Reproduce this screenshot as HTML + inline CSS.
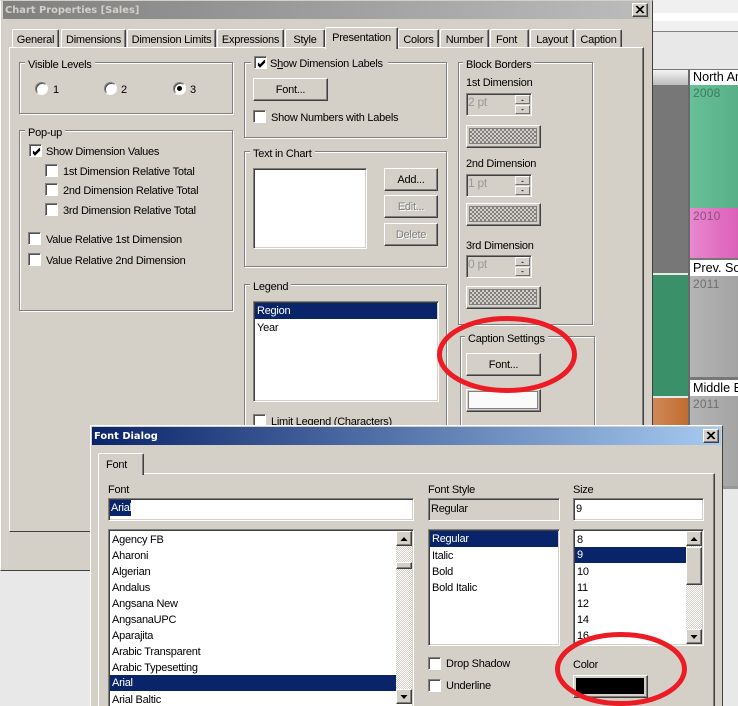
<!DOCTYPE html>
<html><head><meta charset="utf-8"><style>
html,body{margin:0;padding:0;height:706px;overflow:hidden}
body{width:738px;position:relative;background:#e8e8e8;font:11px/18px "Liberation Sans",sans-serif;letter-spacing:-.25px;color:#000}
#w{left:0;top:0;width:738px;height:706px;overflow:hidden}
div,span{position:absolute;box-sizing:border-box}
.t{white-space:nowrap;height:14px}
.bg{background:#d4d0c8}
.g{border:1px solid #808080;box-shadow:inset 1px 1px 0 #fff,1px 1px 0 #fff}
.l{background:#d4d0c8;padding:0 3px;white-space:nowrap;height:14px}
.tab{background:#d4d0c8;border-top:1px solid #fff;border-left:1px solid #fff;border-right:1px solid #404040;box-shadow:inset -1px 0 0 #808080;border-radius:2px 2px 0 0;text-align:center;white-space:nowrap;padding-top:1px}
.cb{width:13px;height:13px;background:#fff;border:1px solid;border-color:#808080 #fff #fff #808080;box-shadow:inset 1px 1px 0 #505050}
.cb svg{position:absolute;left:1px;top:1px}
.rd{width:13px;height:13px;border-radius:50%;background:#fff;border:1px solid;border-color:#808080 #fff #fff #808080;box-shadow:inset 1px 1px 0 #505050}
.rd i{position:absolute;left:3px;top:3px;width:5px;height:5px;border-radius:50%;background:#000}
.btn{background:#d4d0c8;border:1px solid;border-color:#fff #404040 #404040 #fff;box-shadow:inset -1px -1px 0 #808080;text-align:center;white-space:nowrap}
.sp{background:#d4d0c8;border:1px solid;border-color:#fff #707070 #707070 #fff}
.sp svg{position:absolute;left:0;top:0}
.sunk{border:1px solid;border-color:#808080 #fff #fff #808080;box-shadow:inset 1px 1px 0 #404040,inset -1px -1px 0 #d4d0c8;background:#fff}
.dis{color:#808080;text-shadow:1px 1px 0 #fff}
.sw{background:repeating-conic-gradient(#808080 0 25%,#d4d0c8 0 50%) 0 0/4px 4px;box-shadow:0 0 0 1px #808080}
.sel{background:#0a246a;color:#fff}
.dith{background:repeating-conic-gradient(#fff 0 25%,#d4d0c8 0 50%) 0 0/2px 2px}
.ttl{font:bold 9.9px/16px "DejaVu Sans",sans-serif;letter-spacing:0}
.h{font-size:12.6px;letter-spacing:0}
.y{font-size:12px;letter-spacing:.2px}
</style></head><body><div id="w">

<!-- background chart -->
<div style="left:652px;top:0;width:86px;height:13px;background:#f0f0f0"></div>
<div style="left:652px;top:13px;width:86px;height:8px;background:#fff"></div>
<div style="left:652px;top:21px;width:86px;height:10px;background:#f0f0f0"></div>
<div style="left:652px;top:31px;width:86px;height:1px;background:#808080"></div>
<div style="left:652px;top:32px;width:86px;height:38px;background:#e8e8e8"></div>
<div style="left:652px;top:69px;width:86px;height:1px;background:#777"></div>
<div style="left:653px;top:70px;width:35px;height:15px;background:linear-gradient(#f4f4f4,#bbb)"></div>
<div style="left:653px;top:85px;width:35px;height:188px;background:#777"></div>
<div style="left:653px;top:273px;width:35px;height:2px;background:#e8e8e8"></div>
<div style="left:653px;top:275px;width:35px;height:121px;background:#3a9068"></div>
<div style="left:653px;top:396px;width:35px;height:2px;background:#e8e8e8"></div>
<div style="left:653px;top:398px;width:35px;height:30px;background:linear-gradient(90deg,#d08858,#c06c30)"></div>
<div style="left:688px;top:70px;width:2px;height:360px;background:#6a6a6a"></div>
<div style="left:690px;top:70px;width:48px;height:15px;background:#fff"></div>
<div class="t h" style="left:693px;top:68px">North America</div>
<div style="left:690px;top:85px;width:48px;height:123px;background:linear-gradient(90deg,#68c098,#58b088)"></div>
<div class="t y" style="left:693px;top:84px;color:#3f7a60">2008</div>
<div style="left:690px;top:208px;width:48px;height:50px;background:linear-gradient(90deg,#e888d0,#dc60b8)"></div>
<div class="t y" style="left:693px;top:207px;color:#8a5080">2010</div>
<div style="left:690px;top:258px;width:48px;height:2px;background:#777"></div>
<div style="left:690px;top:260px;width:48px;height:16px;background:#fff"></div>
<div class="t h" style="left:693px;top:259px">Prev. Sources</div>
<div style="left:690px;top:276px;width:48px;height:101px;background:linear-gradient(90deg,#b4b4b4,#a4a4a4)"></div>
<div class="t y" style="left:693px;top:275px;color:#707070">2011</div>
<div style="left:690px;top:377px;width:48px;height:3px;background:#777"></div>
<div style="left:690px;top:380px;width:48px;height:16px;background:#fff"></div>
<div class="t h" style="left:693px;top:379px">Middle East</div>
<div style="left:690px;top:396px;width:48px;height:90px;background:linear-gradient(90deg,#b4b4b4,#a4a4a4)"></div>
<div class="t y" style="left:693px;top:395px;color:#707070">2011</div>
<div style="left:723px;top:486px;width:15px;height:3px;background:#999"></div>

<!-- chart properties -->
<div class="bg" style="left:0;top:0;width:653px;height:571px;border-right:1px solid #404040;border-bottom:1px solid #404040;border-left:1px solid #fff;border-top:1px solid #d4d0c8"></div>
<div style="left:3px;top:1px;width:647px;height:18px;background:linear-gradient(90deg,#808080,#bcbcbc)"></div>
<div class="t ttl" style="left:5px;top:3px;color:#d4d0c8">Chart Properties [Sales]</div>
<div class="btn" style="left:632px;top:3px;width:16px;height:14px"><svg width="14" height="12" style="position:absolute;left:0;top:0"><path d="M3 2L10 9M4 2L11 9M10 2L3 9M11 2L4 9" stroke="#000" fill="none"/></svg></div>

<div class="bg" style="left:9px;top:47px;width:635px;height:485px;border-left:1px solid #fff;border-top:1px solid #fff;border-right:1px solid #404040;border-bottom:1px solid #404040;box-shadow:inset -1px 0 0 #808080"></div>

<div class="tab" style="left:12px;top:29px;width:47px;height:18px">General</div>
<div class="tab" style="left:61px;top:29px;width:65px;height:18px">Dimensions</div>
<div class="tab" style="left:127px;top:29px;width:89px;height:18px">Dimension Limits</div>
<div class="tab" style="left:217px;top:29px;width:67px;height:18px">Expressions</div>
<div class="tab" style="left:285px;top:29px;width:40px;height:18px">Style</div>
<div class="tab" style="left:325px;top:27px;width:73px;height:22px;z-index:2">Presentation</div>
<div class="tab" style="left:398px;top:29px;width:41px;height:18px">Colors</div>
<div class="tab" style="left:440px;top:29px;width:49px;height:18px">Number</div>
<div class="tab" style="left:490px;top:29px;width:39px;height:18px;text-align:left;padding-left:5px">Font</div>
<div class="tab" style="left:530px;top:29px;width:44px;height:18px">Layout</div>
<div class="tab" style="left:575px;top:29px;width:47px;height:18px">Caption</div>

<!-- Visible Levels -->
<div class="g" style="left:19px;top:62px;width:214px;height:52px"></div>
<div class="l" style="left:25px;top:56px">Visible Levels</div>
<div class="rd" style="left:35px;top:82px"></div><div class="t" style="left:53px;top:81px">1</div>
<div class="rd" style="left:104px;top:82px"></div><div class="t" style="left:121px;top:81px">2</div>
<div class="rd" style="left:173px;top:82px"><i></i></div><div class="t" style="left:190px;top:81px">3</div>

<!-- Pop-up -->
<div class="g" style="left:19px;top:130px;width:214px;height:181px"></div>
<div class="l" style="left:25px;top:124px">Pop-up</div>
<div class="cb" style="left:29px;top:144px"><svg width="11" height="11"><path d="M2 5L4 7L9 2M2 6L4 8L9 3M2 7L4 9L9 4" stroke="#000" fill="none"/></svg></div>
<div class="t" style="left:46px;top:143px">Show Dimension Values</div>
<div class="cb" style="left:45px;top:164px"></div><div class="t" style="left:63px;top:163px">1st Dimension Relative Total</div>
<div class="cb" style="left:45px;top:183px"></div><div class="t" style="left:63px;top:182px">2nd Dimension Relative Total</div>
<div class="cb" style="left:45px;top:203px"></div><div class="t" style="left:63px;top:202px">3rd Dimension Relative Total</div>
<div class="cb" style="left:28px;top:232px"></div><div class="t" style="left:46px;top:231px">Value Relative 1st Dimension</div>
<div class="cb" style="left:28px;top:253px"></div><div class="t" style="left:46px;top:252px">Value Relative 2nd Dimension</div>

<!-- Show Dimension Labels -->
<div class="g" style="left:244px;top:62px;width:203px;height:76px"></div>
<div class="bg" style="left:251px;top:55px;width:137px;height:15px"></div>
<div class="cb" style="left:254px;top:56px"><svg width="11" height="11"><path d="M2 5L4 7L9 2M2 6L4 8L9 3M2 7L4 9L9 4" stroke="#000" fill="none"/></svg></div>
<div class="t" style="left:270px;top:55px">S<u>h</u>ow Dimension Labels</div>
<div class="btn" style="left:253px;top:78px;width:75px;height:23px;padding-top:2px">Font...</div>
<div class="cb" style="left:253px;top:110px"></div><div class="t" style="left:271px;top:109px">Show Numbers with Labels</div>

<!-- Text in Chart -->
<div class="g" style="left:244px;top:151px;width:203px;height:116px"></div>
<div class="l" style="left:250px;top:145px">Text in Chart</div>
<div class="sunk" style="left:253px;top:168px;width:114px;height:81px"></div>
<div class="btn" style="left:384px;top:168px;width:54px;height:23px;padding-top:2px">Add...</div>
<div class="btn dis" style="left:384px;top:195px;width:54px;height:23px;padding-top:2px">Edit...</div>
<div class="btn dis" style="left:384px;top:223px;width:54px;height:23px;padding-top:2px">Delete</div>

<!-- Legend -->
<div class="g" style="left:244px;top:284px;width:203px;height:160px"></div>
<div class="l" style="left:250px;top:278px">Legend</div>
<div class="sunk" style="left:253px;top:301px;width:186px;height:101px"></div>
<div class="sel t" style="left:255px;top:303px;width:182px;height:16px;padding:0 2px;line-height:17px">Region</div>
<div class="t" style="left:257px;top:319px">Year</div>
<div class="cb" style="left:253px;top:414px"></div><div class="t" style="left:271px;top:413px">Limit Legend (Characters)</div>

<!-- Block Borders -->
<div class="g" style="left:458px;top:62px;width:135px;height:263px"></div>
<div class="l" style="left:463px;top:56px">Block Borders</div>
<div class="t" style="left:466px;top:74px">1st Dimension</div>
<div class="sunk" style="left:466px;top:93px;width:66px;height:23px;background:#d4d0c8"></div>
<div class="t" style="left:468px;top:93px;color:#999;font-size:12px">2 pt</div>
<div class="sp" style="left:515px;top:95px;width:15px;height:9px"><svg width="13" height="7"><path d="M5 5h3L6.5 3.5z" fill="#404040"/></svg></div><div class="sp" style="left:515px;top:105px;width:15px;height:9px"><svg width="13" height="7"><path d="M5 3h3L6.5 4.5z" fill="#404040"/></svg></div>
<div class="btn" style="left:466px;top:125px;width:75px;height:23px"><div class="sw" style="left:3px;top:3px;width:66px;height:14px"></div></div>

<div class="t" style="left:466px;top:155px">2nd Dimension</div>
<div class="sunk" style="left:466px;top:174px;width:66px;height:23px;background:#d4d0c8"></div>
<div class="t" style="left:468px;top:174px;color:#999;font-size:12px">1 pt</div>
<div class="sp" style="left:515px;top:176px;width:15px;height:9px"><svg width="13" height="7"><path d="M5 5h3L6.5 3.5z" fill="#404040"/></svg></div><div class="sp" style="left:515px;top:186px;width:15px;height:9px"><svg width="13" height="7"><path d="M5 3h3L6.5 4.5z" fill="#404040"/></svg></div>
<div class="btn" style="left:466px;top:203px;width:75px;height:23px"><div class="sw" style="left:3px;top:3px;width:66px;height:14px"></div></div>

<div class="t" style="left:466px;top:237px">3rd Dimension</div>
<div class="sunk" style="left:466px;top:255px;width:66px;height:23px;background:#d4d0c8"></div>
<div class="t" style="left:468px;top:255px;color:#999;font-size:12px">0 pt</div>
<div class="sp" style="left:515px;top:257px;width:15px;height:9px"><svg width="13" height="7"><path d="M5 5h3L6.5 3.5z" fill="#404040"/></svg></div><div class="sp" style="left:515px;top:267px;width:15px;height:9px"><svg width="13" height="7"><path d="M5 3h3L6.5 4.5z" fill="#404040"/></svg></div>
<div class="btn" style="left:466px;top:286px;width:75px;height:23px"><div class="sw" style="left:3px;top:3px;width:66px;height:14px"></div></div>

<!-- Caption Settings -->
<div class="g" style="left:460px;top:336px;width:135px;height:100px"></div>
<div class="l" style="left:465px;top:330px">Caption Settings</div>
<div class="btn" style="left:466px;top:353px;width:75px;height:23px;padding-top:2px">Font...</div>
<div class="btn" style="left:466px;top:389px;width:75px;height:23px"><div style="left:2px;top:2px;width:68px;height:16px;background:#fafafa;box-shadow:0 0 0 1px #808080"></div></div>

<!-- Font dialog -->
<div class="bg" style="left:90px;top:425px;width:633px;height:290px;border-left:1px solid #fff;border-top:1px solid #fff;border-right:1px solid #404040;box-shadow:inset 1px 1px 0 #d4d0c8"></div>
<div style="left:92px;top:427px;width:629px;height:18px;background:linear-gradient(90deg,#0a246a,#a6caf0)"></div>
<div class="t ttl" style="left:94px;top:429px;color:#fff">Font Dialog</div>
<div class="btn" style="left:703px;top:429px;width:16px;height:14px"><svg width="14" height="12" style="position:absolute;left:0;top:0"><path d="M3 2L10 9M4 2L11 9M10 2L3 9M11 2L4 9" stroke="#000" fill="none"/></svg></div>

<div class="bg" style="left:98px;top:473px;width:617px;height:240px;border-left:1px solid #fff;border-top:1px solid #fff;border-right:1px solid #404040;box-shadow:inset -1px 0 0 #808080"></div>
<div class="tab" style="left:98px;top:453px;width:46px;height:22px;z-index:2;padding-top:2px;text-align:left;padding-left:7px">Font</div>

<div class="t" style="left:108px;top:481px">Font</div>
<div class="sunk" style="left:108px;top:498px;width:306px;height:23px"></div>
<div class="sel t" style="left:110px;top:500px;width:21px;height:16px;padding-left:1px;line-height:17px">Arial</div>

<div class="sunk" style="left:108px;top:529px;width:306px;height:180px"></div>
<div class="t" style="left:112px;top:531px">Agency FB</div>
<div class="t" style="left:112px;top:547px">Aharoni</div>
<div class="t" style="left:112px;top:563px">Algerian</div>
<div class="t" style="left:112px;top:579px">Andalus</div>
<div class="t" style="left:112px;top:595px">Angsana New</div>
<div class="t" style="left:112px;top:611px">AngsanaUPC</div>
<div class="t" style="left:112px;top:627px">Aparajita</div>
<div class="t" style="left:112px;top:643px">Arabic Transparent</div>
<div class="t" style="left:112px;top:659px">Arabic Typesetting</div>
<div class="sel t" style="left:110px;top:675px;width:286px;height:16px;padding:0 2px;line-height:17px">Arial</div>
<div class="t" style="left:112px;top:691px">Arial Baltic</div>
<div class="dith" style="left:396px;top:531px;width:16px;height:173px"></div>
<div class="btn" style="left:396px;top:531px;width:16px;height:15px"><svg width="14" height="13" style="position:absolute;left:0;top:0"><path d="M3.5 9h7L7 5z" fill="#000"/></svg></div>
<div class="btn" style="left:396px;top:562px;width:16px;height:7px"></div>
<div class="btn" style="left:396px;top:689px;width:16px;height:15px"><svg width="14" height="13" style="position:absolute;left:0;top:0"><path d="M3.5 5h7L7 9z" fill="#000"/></svg></div>

<div class="t" style="left:428px;top:481px">Font Style</div>
<div class="sunk" style="left:428px;top:498px;width:132px;height:23px;background:#d4d0c8"></div>
<div class="t" style="left:431px;top:500px">Regular</div>
<div class="sunk" style="left:428px;top:529px;width:132px;height:117px"></div>
<div class="sel t" style="left:430px;top:531px;width:128px;height:16px;padding:0 2px;line-height:17px">Regular</div>
<div class="t" style="left:432px;top:547px">Italic</div>
<div class="t" style="left:432px;top:563px">Bold</div>
<div class="t" style="left:432px;top:579px">Bold Italic</div>

<div class="t" style="left:573px;top:481px">Size</div>
<div class="sunk" style="left:573px;top:498px;width:131px;height:23px"></div>
<div class="t" style="left:576px;top:500px">9</div>
<div class="sunk" style="left:573px;top:529px;width:131px;height:117px"></div>
<div class="t" style="left:577px;top:531px">8</div>
<div class="sel t" style="left:575px;top:547px;width:111px;height:16px;padding:0 2px;line-height:17px">9</div>
<div class="t" style="left:577px;top:563px">10</div>
<div class="t" style="left:577px;top:579px">11</div>
<div class="t" style="left:577px;top:595px">12</div>
<div class="t" style="left:577px;top:611px">14</div>
<div class="t" style="left:577px;top:627px">16</div>
<div class="dith" style="left:686px;top:531px;width:16px;height:113px"></div>
<div class="btn" style="left:686px;top:531px;width:16px;height:15px"><svg width="14" height="13" style="position:absolute;left:0;top:0"><path d="M3.5 9h7L7 5z" fill="#000"/></svg></div>
<div class="btn" style="left:686px;top:547px;width:16px;height:38px"></div>
<div class="btn" style="left:686px;top:629px;width:16px;height:15px"><svg width="14" height="13" style="position:absolute;left:0;top:0"><path d="M3.5 5h7L7 9z" fill="#000"/></svg></div>

<div class="cb" style="left:428px;top:657px"></div><div class="t" style="left:446px;top:655px">Drop Shadow</div>
<div class="cb" style="left:428px;top:679px"></div><div class="t" style="left:446px;top:677px">Underline</div>
<div class="t" style="left:573px;top:656px">Color</div>
<div class="btn" style="left:573px;top:675px;width:75px;height:23px"><div style="left:2px;top:2px;width:68px;height:16px;background:#000"></div></div>

<svg width="738" height="706" style="position:absolute;left:0;top:0">
<ellipse cx="507" cy="354.5" rx="67.5" ry="36" fill="none" stroke="#ed1c24" stroke-width="5"/>
<ellipse cx="621" cy="669" rx="63.5" ry="34.5" fill="none" stroke="#ed1c24" stroke-width="5"/>
</svg>
</div></body></html>
